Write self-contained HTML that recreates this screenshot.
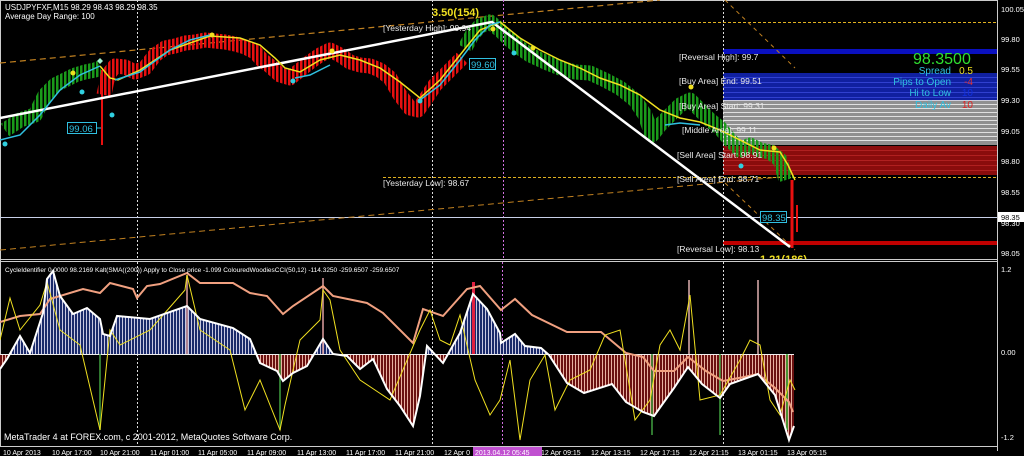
<!DOCTYPE html>
<html><head><meta charset="utf-8"><style>
html,body{margin:0;padding:0;background:#000;width:1024px;height:456px;overflow:hidden}
svg{display:block}
text{font-family:"Liberation Sans",sans-serif}
</style></head><body>
<svg width="1024" height="456" viewBox="0 0 1024 456" xmlns="http://www.w3.org/2000/svg">
<defs>
<pattern id="pb" width="3" height="10" patternUnits="userSpaceOnUse"><rect width="3" height="10" fill="#1a2a6a"/><rect x="2" width="1" height="10" fill="#c8c8e0"/></pattern>
<pattern id="pr" width="3" height="10" patternUnits="userSpaceOnUse"><rect width="3" height="10" fill="#6a1010"/><rect x="2" width="1" height="10" fill="#e8b0a0"/></pattern>
<pattern id="sg" width="4" height="10" patternUnits="userSpaceOnUse"><rect width="2.5" height="10" fill="#1a9a1a"/></pattern>
<pattern id="sr" width="4" height="10" patternUnits="userSpaceOnUse"><rect width="2.5" height="10" fill="#e81010"/></pattern>
<mask id="mg"><g fill="none" stroke="#fff" stroke-width="15" stroke-linejoin="round">
<polyline points="5,130 20,120 35,115 45,95 55,85 65,80 75,75 85,72 95,70 100,68"/>
<polyline points="465,48 472,35 480,26 490,22 500,30 510,40 520,48 530,55 545,62 560,68 575,72 590,73 605,80 620,88 635,100 645,115 652,135 660,125 670,115 680,105 690,100 700,110 710,120 720,128 730,140 740,150 750,145 760,150 770,152 780,160 786,180"/>
</g></mask>
<mask id="mr"><polyline fill="none" stroke="#fff" stroke-width="15" stroke-linejoin="round" points="104,95 108,75 115,66 125,67 135,72 145,68 155,55 165,48 175,46 185,43 195,42 205,40 215,41 225,42 235,44 245,47 255,52 262,60 270,66 280,75 290,78 300,70 310,62 320,55 330,50 340,55 350,62 360,65 370,66 380,70 390,78 400,95 410,108 418,110 425,100 435,85 445,75 455,65 462,58"/></mask>
<clipPath id="up"><rect x="0" y="262" width="997" height="92"/></clipPath>
<clipPath id="dn"><rect x="0" y="354" width="997" height="96"/></clipPath>
<clipPath id="main"><rect x="0" y="0" width="997" height="259"/></clipPath>
</defs>
<rect width="1024" height="456" fill="#000"/>
<line x1="0" y1="0.5" x2="997" y2="0.5" stroke="#ccc"/>
<line x1="997.5" y1="0" x2="997.5" y2="451" stroke="#ccc"/>
<line x1="0" y1="259.5" x2="997" y2="259.5" stroke="#ccc"/>
<line x1="0" y1="261.5" x2="997" y2="261.5" stroke="#ccc"/>
<line x1="0" y1="446.5" x2="997" y2="446.5" stroke="#ccc"/>
<line x1="0.5" y1="0" x2="0.5" y2="446" stroke="#ccc"/>
<g clip-path="url(#main)">
<rect x="723" y="49" width="274" height="5" fill="#0a10c0"/>
<rect x="723" y="73" width="274" height="27" fill="#1020a0"/>
<g stroke="#3040d0" stroke-width="1"><line x1="723" y1="77.5" x2="997" y2="77.5"/><line x1="723" y1="82.5" x2="997" y2="82.5"/><line x1="723" y1="87.5" x2="997" y2="87.5"/><line x1="723" y1="92.5" x2="997" y2="92.5"/><line x1="723" y1="97.5" x2="997" y2="97.5"/></g>
<line x1="723" y1="100.5" x2="997" y2="100.5" stroke="#ccd" />
<rect x="723" y="101" width="274" height="44" fill="#909090"/>
<g stroke="#e0e0e0"><line x1="723" y1="104.5" x2="997" y2="104.5"/><line x1="723" y1="108.5" x2="997" y2="108.5"/><line x1="723" y1="112.5" x2="997" y2="112.5"/><line x1="723" y1="116.5" x2="997" y2="116.5"/><line x1="723" y1="120.5" x2="997" y2="120.5"/><line x1="723" y1="124.5" x2="997" y2="124.5"/><line x1="723" y1="128.5" x2="997" y2="128.5"/><line x1="723" y1="132.5" x2="997" y2="132.5"/><line x1="723" y1="136.5" x2="997" y2="136.5"/><line x1="723" y1="140.5" x2="997" y2="140.5"/></g>
<rect x="723" y="146" width="274" height="29" fill="#8a0c0c"/>
<g stroke="#b02020"><line x1="723" y1="150.5" x2="997" y2="150.5"/><line x1="723" y1="155.5" x2="997" y2="155.5"/><line x1="723" y1="160.5" x2="997" y2="160.5"/><line x1="723" y1="165.5" x2="997" y2="165.5"/><line x1="723" y1="170.5" x2="997" y2="170.5"/></g>
<rect x="723" y="241" width="274" height="4" fill="#c00000"/>
<line x1="137.5" y1="0" x2="137.5" y2="259" stroke="#ddd" stroke-dasharray="2 2"/>
<line x1="432.5" y1="0" x2="432.5" y2="259" stroke="#ddd" stroke-dasharray="2 2"/>
<line x1="723.5" y1="0" x2="723.5" y2="259" stroke="#ddd" stroke-dasharray="2 2"/>
<line x1="503.5" y1="0" x2="503.5" y2="259" stroke="#d070e0" stroke-dasharray="2 2"/>
<line x1="503" y1="22.5" x2="997" y2="22.5" stroke="#e0b020" stroke-dasharray="3 2"/>
<line x1="383" y1="177.5" x2="997" y2="177.5" stroke="#e0b020" stroke-dasharray="3 2"/>
<line x1="0" y1="217.5" x2="997" y2="217.5" stroke="#c8d0e8"/>
<line x1="0" y1="63" x2="660" y2="0" stroke="#c08020" stroke-width="1.2" stroke-dasharray="6 4"/>
<line x1="0" y1="250" x2="780" y2="177" stroke="#c08020" stroke-width="1" stroke-dasharray="6 4"/>
<line x1="725" y1="0" x2="795" y2="68" stroke="#c08020" stroke-dasharray="4 4"/>
<line x1="725" y1="183" x2="795" y2="250" stroke="#c08020" stroke-dasharray="4 4"/>
<rect x="0" y="0" width="800" height="259" fill="url(#sg)" mask="url(#mg)"/>
<rect x="0" y="0" width="800" height="259" fill="url(#sr)" mask="url(#mr)"/>
<line x1="102" y1="70" x2="102" y2="145" stroke="#e81010" stroke-width="2"/>
<line x1="792" y1="180" x2="792" y2="248" stroke="#e81010" stroke-width="3"/>
<line x1="797" y1="205" x2="797" y2="232" stroke="#e81010" stroke-width="2"/>
<polyline fill="none" stroke="#fff" stroke-width="2.5" points="0,118 492,22 790,247"/>
<polyline fill="none" stroke="#f0e020" stroke-width="1.5" points="100,66 110,78 118,80 140,70 170,50 210,36 240,38 260,45 275,58 285,68 300,72 320,60 340,55 360,60 380,68 400,82 420,98 440,80 460,55 480,30 500,22 520,38 540,50 560,60 580,68 600,78 620,85 640,95 660,110 680,118 700,122 720,130 740,140 760,150 780,152 788,165 795,180"/>
<polyline fill="none" stroke="#30c0e0" stroke-width="1.5" points="0,140 20,135 40,115 60,90 80,75 100,66"/>
<polyline fill="none" stroke="#30c0e0" stroke-width="1.5" points="115,80 140,72 170,50 190,40 210,35"/>
<polyline fill="none" stroke="#30c0e0" stroke-width="1.5" points="295,78 310,75 330,65"/>
<polyline fill="none" stroke="#30c0e0" stroke-width="1.5" points="420,100 440,85 460,60 475,40 490,25 500,22"/>
<polyline fill="none" stroke="#30c0e0" stroke-width="1.5" points="665,125 680,123 700,125"/>
<g fill="#30d0e0"><circle cx="5" cy="144" r="2.5"/><circle cx="82" cy="92" r="2.5"/><circle cx="112" cy="115" r="2.5"/><circle cx="293" cy="81" r="2.5"/><circle cx="420" cy="101" r="2.5"/><circle cx="514" cy="53" r="2.5"/><circle cx="741" cy="166" r="2.5"/></g>
<g fill="#f0e020"><circle cx="73" cy="73" r="2.5"/><circle cx="212" cy="35" r="2.5"/><circle cx="332" cy="51" r="2.5"/><circle cx="493" cy="29" r="2.5"/><circle cx="533" cy="48" r="2.5"/><circle cx="691" cy="87" r="2.5"/><circle cx="774" cy="148" r="2.5"/></g>
<path d="M100,58 l3,3 -3,3 -3,-3z" fill="#a0f0d0"/>
<rect x="67.5" y="122.5" width="29" height="11" fill="#000" stroke="#30c0e0"/><text x="69" y="132" font-size="9.5" fill="#30c0e0">99.06</text>
<line x1="97" y1="128" x2="101" y2="128" stroke="#30c0e0"/>
<rect x="469.5" y="58.5" width="26" height="11" fill="#000" stroke="#30c0e0"/><text x="471" y="68" font-size="9.5" fill="#30c0e0">99.60</text>
<rect x="760.5" y="211.5" width="26" height="11" fill="#000" stroke="#30c0e0"/><text x="762" y="221" font-size="9.5" fill="#30c0e0">98.35</text>
<g font-size="8.5" fill="#e8e8e8">
<text x="383" y="31">[Yesterday High]: 99.94</text>
<text x="383" y="186">[Yesterday Low]: 98.67</text>
<text x="679" y="60">[Reversal High]: 99.7</text>
<text x="679" y="84">[Buy Area] End: 99.51</text>
<text x="679" y="109">[Buy Area] Start: 99.31</text>
<text x="682" y="133">[Middle Area]: 99.11</text>
<text x="677" y="158">[Sell Area] Start: 98.91</text>
<text x="677" y="182">[Sell Area] End: 98.71</text>
<text x="677" y="252">[Reversal Low]: 98.13</text>
</g>
<text x="432" y="16" font-size="11" font-weight="bold" fill="#f0e020">3.50(154)</text>
<text x="760" y="263" font-size="11" font-weight="bold" fill="#f0e020">1.21(186)</text>
<text x="913" y="64" font-size="16" fill="#30e030">98.3500</text>
<g font-size="10" text-anchor="end">
<text x="951" y="74" fill="#30c0e0">Spread</text><text x="973" y="74" fill="#f0e020">0.5</text>
<text x="951" y="85" fill="#30c0e0">Pips to Open</text><text x="973" y="85" fill="#e03030">-4</text>
<text x="951" y="96" fill="#30c0e0">Hi to Low</text><text x="973" y="96" fill="#1030e0">10</text>
<text x="951" y="108" fill="#30c0e0">Daily Av</text><text x="973" y="108" fill="#e02020">10</text>
</g>
<text x="5" y="10" font-size="8" fill="#fff">USDJPYFXF,M15  98.29 98.43 98.29 98.35</text>
<text x="5" y="19" font-size="8" fill="#fff">Average Day  Range: 100</text>
</g>
<g font-size="7.5" fill="#fff">
<text x="1001" y="12">100.05</text><text x="1001" y="42">99.80</text><text x="1001" y="72">99.55</text><text x="1001" y="103">99.30</text><text x="1001" y="134">99.05</text><text x="1001" y="164">98.80</text><text x="1001" y="195">98.55</text><text x="1001" y="226">98.30</text><text x="1001" y="256">98.05</text>
<text x="1001" y="272">1.2</text><text x="1001" y="355">0.00</text><text x="1001" y="440">-1.2</text>
</g>
<rect x="998" y="212" width="26" height="10" fill="#fff"/><text x="1001" y="220" font-size="7.5" fill="#000">98.35</text>
<line x1="137.5" y1="262" x2="137.5" y2="446" stroke="#ddd" stroke-dasharray="2 2"/>
<line x1="432.5" y1="262" x2="432.5" y2="446" stroke="#ddd" stroke-dasharray="2 2"/>
<line x1="723.5" y1="262" x2="723.5" y2="446" stroke="#ddd" stroke-dasharray="2 2"/>
<line x1="502.5" y1="262" x2="502.5" y2="446" stroke="#d070e0" stroke-dasharray="2 2"/>
<polygon clip-path="url(#up)" fill="url(#pb)" points="0,354 0,369 7,359 20,336 30,353 43,313 47,279 53,271 60,296 73,314 87,308 100,319 103,334 110,336 117,316 150,319 187,306 200,319 233,328 250,339 260,363 277,371 283,381 293,373 307,366 323,339 333,354 347,356 360,369 373,359 387,389 400,406 413,426 420,396 427,346 443,363 460,333 473,294 487,309 500,333 501,343 515,334 525,346 541,348 549,355 567,383 584,393 612,384 626,402 643,412 654,416 674,388 688,367 702,384 720,398 730,384 758,374 775,395 789,440 794,426 794,354"/>
<polygon clip-path="url(#dn)" fill="url(#pr)" points="0,354 0,369 7,359 20,336 30,353 43,313 47,279 53,271 60,296 73,314 87,308 100,319 103,334 110,336 117,316 150,319 187,306 200,319 233,328 250,339 260,363 277,371 283,381 293,373 307,366 323,339 333,354 347,356 360,369 373,359 387,389 400,406 413,426 420,396 427,346 443,363 460,333 473,294 487,309 500,333 501,343 515,334 525,346 541,348 549,355 567,383 584,393 612,384 626,402 643,412 654,416 674,388 688,367 702,384 720,398 730,384 758,374 775,395 789,440 794,426 794,354"/>
<line x1="0" y1="354.5" x2="794" y2="354.5" stroke="#eee"/>
<rect x="472" y="282" width="3" height="72" fill="#e02040"/>
<g stroke-width="1.5"><line x1="187" y1="275" x2="187" y2="354" stroke="#e0a0a0"/><line x1="323" y1="278" x2="323" y2="354" stroke="#e0a0a0"/><line x1="689" y1="280" x2="689" y2="354" stroke="#e0b0b0"/><line x1="758" y1="280" x2="758" y2="354" stroke="#e0b0b0"/>
<line x1="100" y1="354" x2="100" y2="430" stroke="#40a040"/><line x1="280" y1="354" x2="280" y2="430" stroke="#40a040"/><line x1="652" y1="354" x2="652" y2="435" stroke="#40a040"/><line x1="720" y1="354" x2="720" y2="435" stroke="#40a040"/><line x1="787" y1="354" x2="787" y2="430" stroke="#40c040"/></g>
<polyline fill="none" stroke="#f0a080" stroke-width="2" points="0,322 20,316 40,314 50,299 83,289 100,293 110,283 133,289 137,298 147,286 160,284 187,273 200,283 233,283 250,293 267,296 283,314 293,306 323,286 333,296 367,303 383,313 413,343 423,309 443,316 467,289 480,286 501,310 515,299 532,315 567,332 601,332 626,353 643,357 654,371 674,371 688,357 706,371 723,381 744,377 758,374 775,388 789,402 793,412"/>
<polyline fill="none" stroke="#f0e020" stroke-width="1" points="0,340 10,298 20,330 40,305 47,282 60,330 80,345 100,430 110,330 120,345 150,330 185,290 187,275 200,330 230,350 245,410 260,380 280,430 285,405 300,340 320,320 323,290 330,300 340,350 360,380 390,400 420,330 430,310 440,340 450,345 460,315 475,380 490,415 500,400 510,360 520,440 530,380 545,355 555,410 570,380 590,370 605,335 620,330 635,420 650,400 660,345 670,330 680,350 690,295 700,400 720,395 740,360 750,340 760,345 770,400 780,415 790,380 795,390"/>
<polyline fill="none" stroke="#fff" stroke-width="2" points="0,369 7,359 20,336 30,353 43,313 47,279 53,271 60,296 73,314 87,308 100,319 103,334 110,336 117,316 150,319 187,306 200,319 233,328 250,339 260,363 277,371 283,381 293,373 307,366 323,339 333,354 347,356 360,369 373,359 387,389 400,406 413,426 420,396 427,346 443,363 460,333 473,294 487,309 500,333 501,343 515,334 525,346 541,348 549,355 567,383 584,393 612,384 626,402 643,412 654,416 674,388 688,367 702,384 720,398 730,384 758,374 775,395 789,440 794,426"/>
<text x="5" y="272" font-size="6.5" fill="#fff">CycleIdentifier 0.0000 98.2169  Kalt(SMA((200)) Apply to Close price -1.099  ColouredWoodiesCCI(50,12) -114.3250 -259.6507 -259.6507</text>
<text x="4" y="440" font-size="9" fill="#fff">MetaTrader 4 at FOREX.com, c 2001-2012, MetaQuotes Software Corp.</text>
<g font-size="7" fill="#fff">
<text x="3" y="455">10 Apr 2013</text><text x="52" y="455">10 Apr 17:00</text><text x="100" y="455">10 Apr 21:00</text><text x="150" y="455">11 Apr 01:00</text><text x="198" y="455">11 Apr 05:00</text><text x="247" y="455">11 Apr 09:00</text><text x="297" y="455">11 Apr 13:00</text><text x="346" y="455">11 Apr 17:00</text><text x="395" y="455">11 Apr 21:00</text><text x="444" y="455">12 Apr 0</text>
<text x="541" y="455">12 Apr 09:15</text><text x="591" y="455">12 Apr 13:15</text><text x="640" y="455">12 Apr 17:15</text><text x="689" y="455">12 Apr 21:15</text><text x="738" y="455">13 Apr 01:15</text><text x="787" y="455">13 Apr 05:15</text>
</g>
<rect x="473" y="447" width="69" height="9" fill="#c050d0"/><text x="475" y="455" font-size="7" fill="#fff">2013.04.12 05:45</text>
</svg>
</body></html>
